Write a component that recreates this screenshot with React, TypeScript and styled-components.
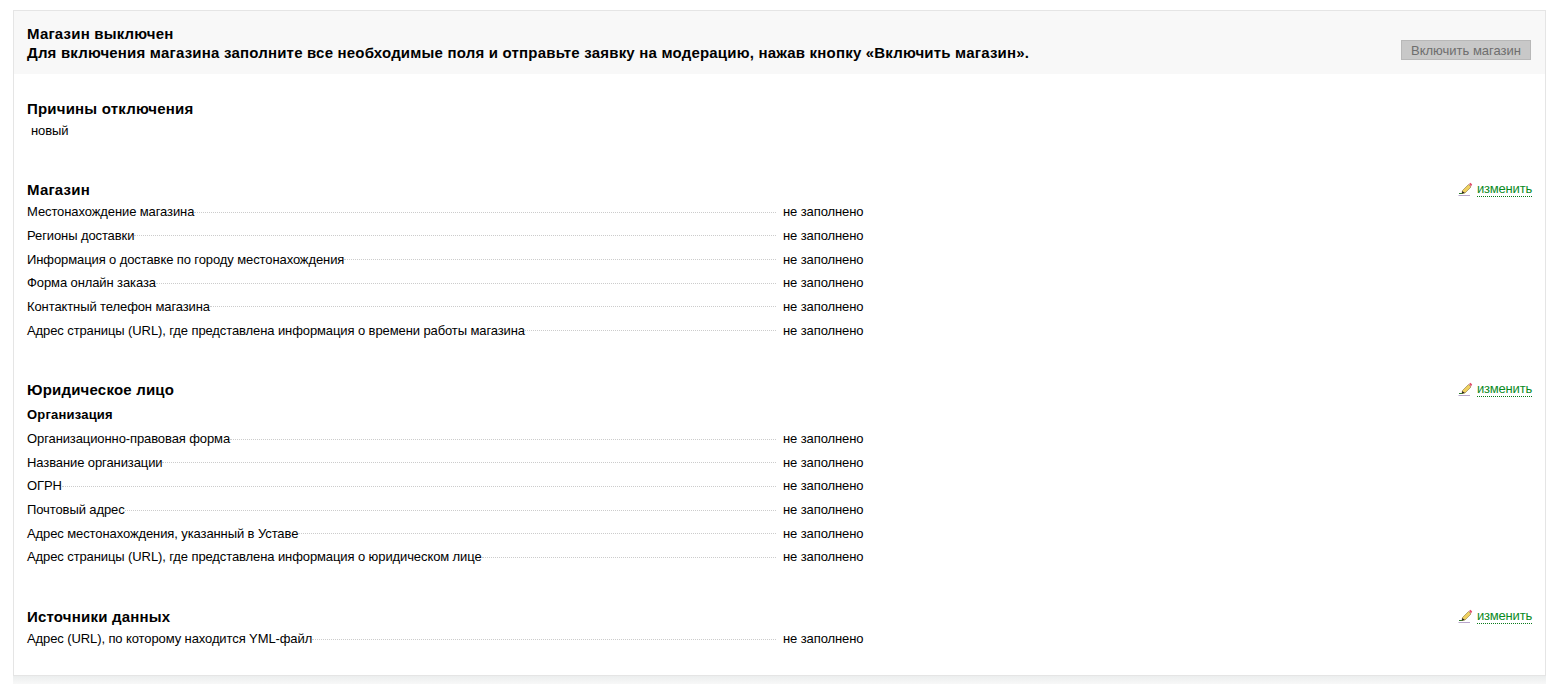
import React from "react";
import styled, { createGlobalStyle } from "styled-components";

const Global = createGlobalStyle`
  html, body { margin: 0; padding: 0; background: #fff; }
  body { font-family: "Liberation Sans", Arial, sans-serif; font-size: 13px; letter-spacing: -0.1px; color: #000; }
`;

const Page = styled.div`
  width: 1560px;
  height: 690px;
  padding: 10px 14px 0 13px;
  box-sizing: border-box;
  overflow: hidden;
`;

const Panel = styled.main`
  border: 1px solid #e5e5e5;
  height: 666px;
  box-sizing: border-box;
  display: flex;
  flex-direction: column;
`;

const Footer = styled.div`
  height: 8px;
  background: linear-gradient(#eceeee, #f8f8f8);
`;

const Notice = styled.header`
  background: #f8f8f8;
  height: 63px;
  box-sizing: border-box;
  padding: 13px 14px 0 13px;
  display: flex;
  justify-content: space-between;
`;

const NoticeText = styled.div`
  font-size: 15px;
  font-weight: bold;
  line-height: 19px;
  letter-spacing: 0.2px;
`;

const EnableButton = styled.button`
  align-self: flex-start;
  margin-top: 16px;
  width: 130px;
  height: 20px;
  padding: 0;
  border: 1px solid #b8b8b8;
  background: #c8c8c8;
  color: #6e6e6e;
  font: 13px "Liberation Sans", Arial, sans-serif;
  letter-spacing: 0;
`;

const Section = styled.section<{ $top: number }>`
  padding: 0 13px 0 13px;
  margin-top: ${(p) => p.$top}px;
`;

const TitleRow = styled.div`
  display: flex;
  justify-content: space-between;
  height: 22px;
  align-items: flex-start;
`;

const Title = styled.h2`
  margin: 2px 0 0;
  font-size: 15px;
  line-height: 20px;
  font-weight: bold;
  letter-spacing: 0.2px;
`;

const EditLink = styled.a`
  display: flex;
  align-items: flex-start;
  gap: 4px;
  margin-top: 4px;
`;

const EditText = styled.span`
  color: #0a8a1e;
  line-height: 14px;
  letter-spacing: -0.2px;
  border-bottom: 1px dotted #0a7a1a;
`;

const Plain = styled.p`
  margin: 2px 0 0;
  padding-left: 4px;
  line-height: 20px;
`;

const Subtitle = styled.h3`
  margin: 2px 0 0;
  font-size: 13px;
  font-weight: bold;
  line-height: 25px;
  letter-spacing: 0.2px;
`;

const Row = styled.div`
  height: 23.65px;
  display: flex;
  align-items: center;
`;

const Label = styled.div`
  width: 749px;
  display: flex;
  align-items: center;
  margin-right: 7px;
`;

const Leader = styled.span`
  flex: 1;
  border-bottom: 1px dotted #cccccc;
  margin-top: 1px;
`;

const Value = styled.div``;

const Pencil = () => (
  <svg width="15" height="14" viewBox="0 0 15 14">
    <path d="M0.5 13.5H12" stroke="#b9a6cc" strokeWidth="1" />
    <path d="M1 11.5H5" stroke="#2a7a2a" strokeWidth="1" />
    <path d="M4.5 8.5L10.5 2.5L13 5L7 11L4 11.5Z" fill="#f0d060" stroke="#8a7a40" strokeWidth="0.6" />
    <path d="M4.2 9L6.8 11L4 11.5Z" fill="#222" />
    <path d="M11 2L12.5 0.8L14.2 2.6L13 4.5Z" fill="#e0506a" />
  </svg>
);

const Edit = () => (
  <EditLink>
    <Pencil />
    <EditText>изменить</EditText>
  </EditLink>
);

const Rows = ({ items }: { items: string[] }) => (
  <>
    {items.map((t) => (
      <Row key={t}>
        <Label>
          {t}
          <Leader />
        </Label>
        <Value>не заполнено</Value>
      </Row>
    ))}
  </>
);

export default function App() {
  return (
    <Page>
      <Global />
      <Panel>
        <Notice>
          <NoticeText>
            Магазин выключен
            <br />
            Для включения магазина заполните все необходимые поля и отправьте заявку на модерацию, нажав кнопку «Включить магазин».
          </NoticeText>
          <EnableButton disabled>Включить магазин</EnableButton>
        </Notice>
        <Section $top={23}>
          <TitleRow>
            <Title>Причины отключения</Title>
          </TitleRow>
          <Plain>новый</Plain>
        </Section>
        <Section $top={37}>
          <TitleRow>
            <Title>Магазин</Title>
            <Edit />
          </TitleRow>
          <Rows
            items={[
              "Местонахождение магазина",
              "Регионы доставки",
              "Информация о доставке по городу местонахождения",
              "Форма онлайн заказа",
              "Контактный телефон магазина",
              "Адрес страницы (URL), где представлена информация о времени работы магазина",
            ]}
          />
        </Section>
        <Section $top={36}>
          <TitleRow>
            <Title>Юридическое лицо</Title>
            <Edit />
          </TitleRow>
          <Subtitle>Организация</Subtitle>
          <Rows
            items={[
              "Организационно-правовая форма",
              "Название организации",
              "ОГРН",
              "Почтовый адрес",
              "Адрес местонахождения, указанный в Уставе",
              "Адрес страницы (URL), где представлена информация о юридическом лице",
            ]}
          />
        </Section>
        <Section $top={36}>
          <TitleRow>
            <Title>Источники данных</Title>
            <Edit />
          </TitleRow>
          <Rows items={["Адрес (URL), по которому находится YML-файл"]} />
        </Section>
      </Panel>
      <Footer />
    </Page>
  );
}
